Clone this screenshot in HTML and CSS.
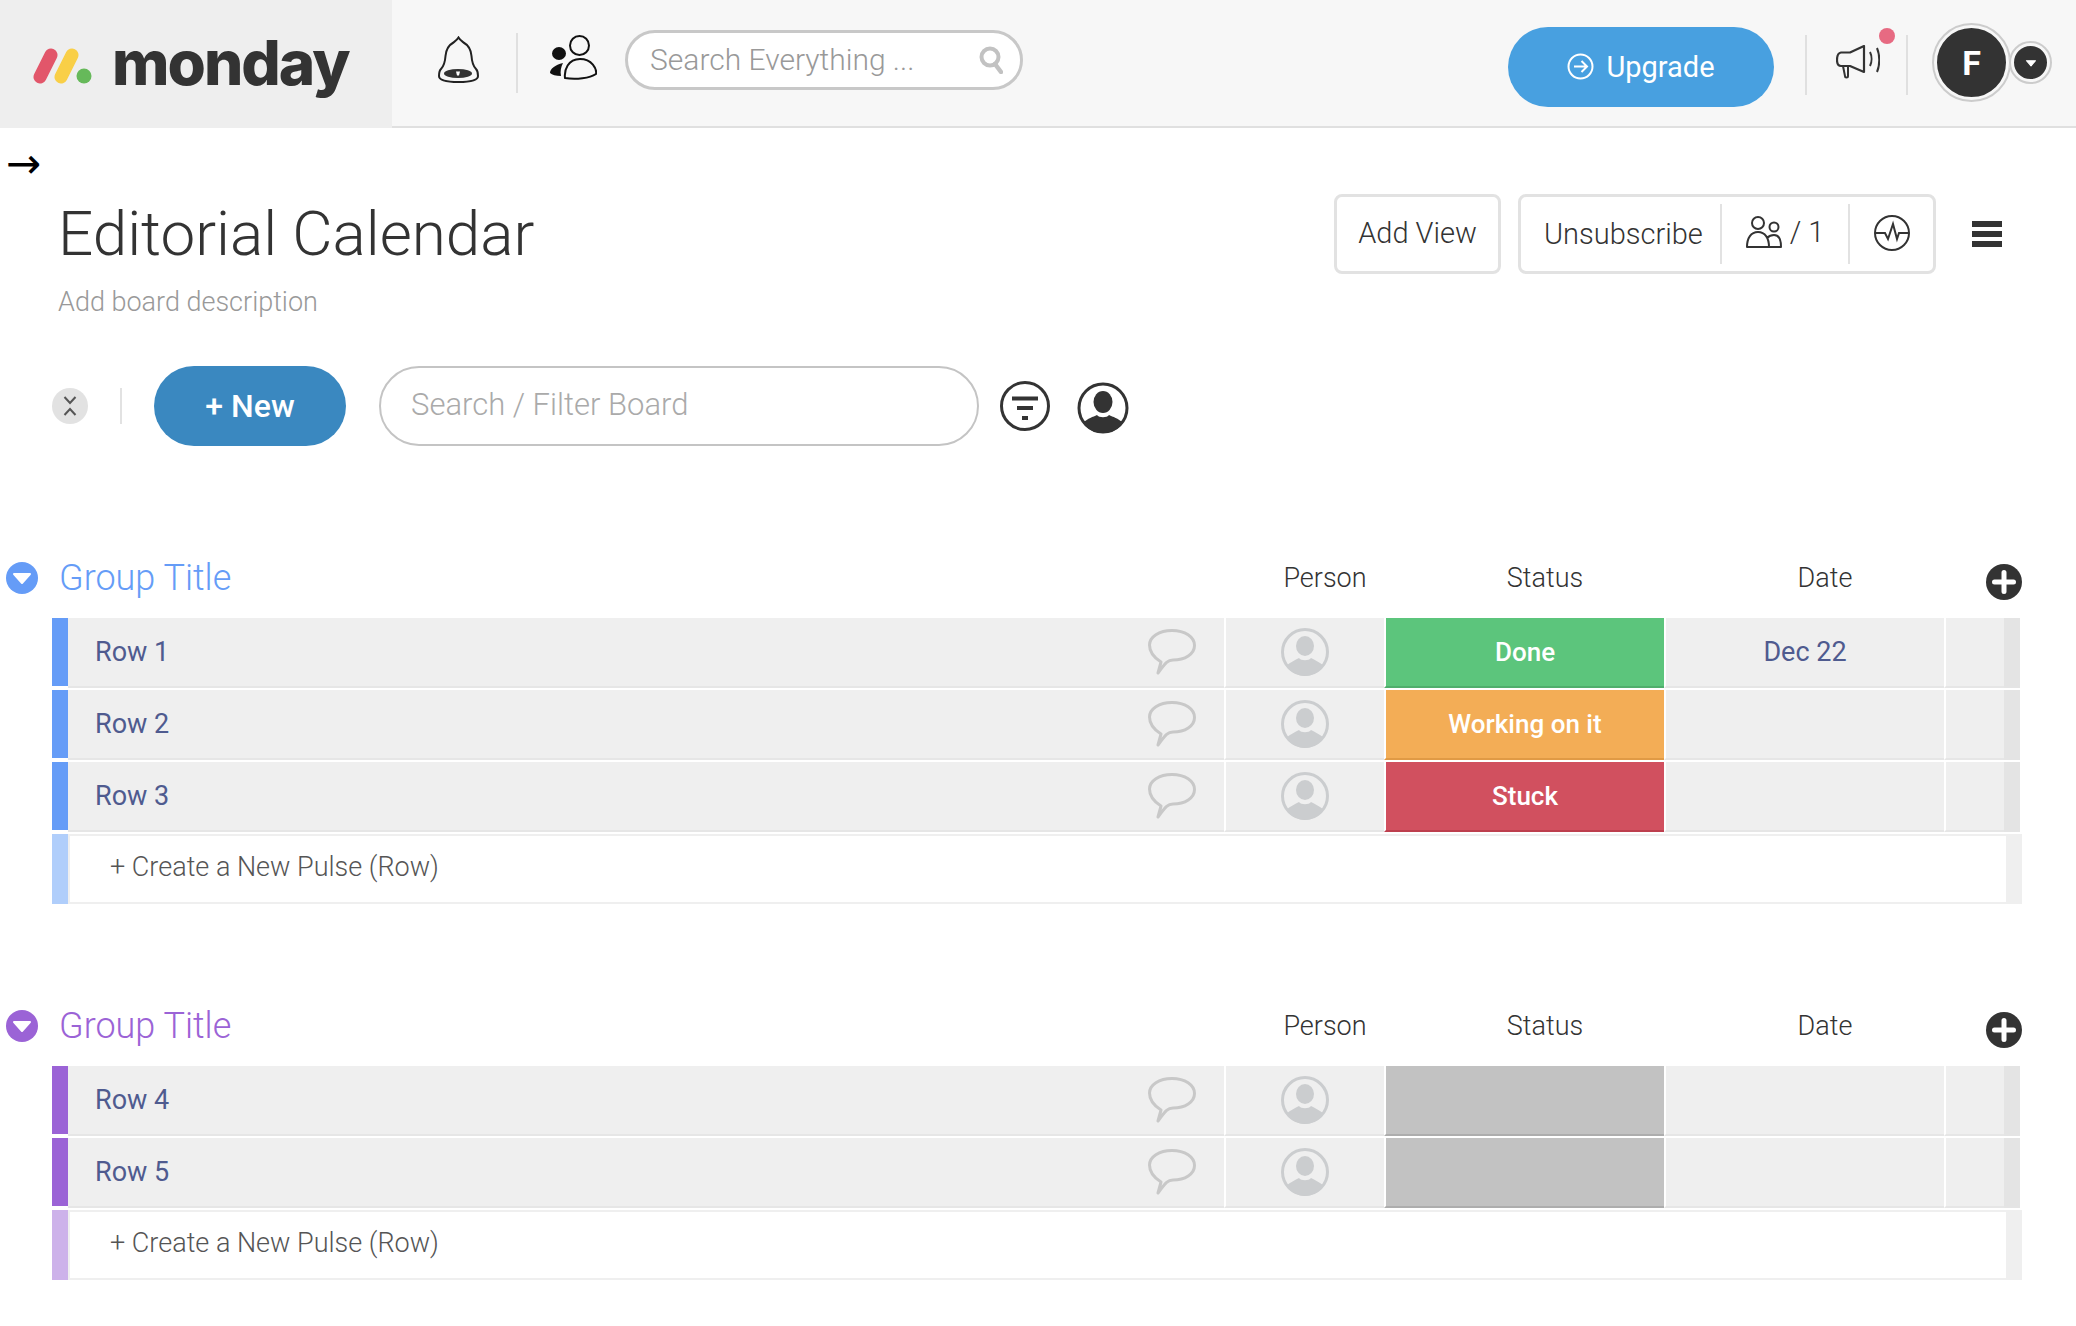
FILE: index.html
```html
<!DOCTYPE html>
<html lang="en">
<head>
	<meta charset="UTF-8">
	<title>Editorial Calendar</title>
	<link rel="stylesheet" href="styles.css">
</head>
<body>
	<svg class="defs" width="0" height="0">
		<symbol id="bubble" viewBox="0 0 48 46">
			<path d="M10 44 L13 33 C5 28 1.500 22 1.500 16 C1.500 8 11 1.500 24 1.500 C37 1.500 46.500 8 46.500 16.500 C46.500 25 37 31 25 31 C20 31 18 33 10 44 Z" fill="none" stroke="#c8c8c8" stroke-width="3" stroke-linejoin="round"/>
		</symbol>
		<symbol id="avatar" viewBox="0 0 48 48">
			<circle cx="24" cy="24" r="22.500" fill="none" stroke="#cbcdcf" stroke-width="3"/>
			<ellipse cx="24" cy="18" rx="9" ry="10" fill="#cbcdcf"/>
			<path d="M6 37 C10 34 14 32 18 30 C20 33 28 33 30 30 C34 32 38 34 42 37 C38 44 31 48 24 48 C17 48 10 44 6 37 Z" fill="#cbcdcf"/>
		</symbol>
		<symbol id="caret" viewBox="0 0 32 32">
			<path d="M8 12 H24 L16 21 Z" fill="#fff" stroke="#fff" stroke-width="2" stroke-linejoin="round"/>
		</symbol>
		<symbol id="plus" viewBox="0 0 36 36">
			<circle cx="18" cy="18" r="18" fill="#333"/>
			<path d="M18 8.500 V27.500 M8.500 18 H27.500" stroke="#fff" stroke-width="5" stroke-linecap="round"/>
		</symbol>
	</svg>

	<header class="topbar">
		<div class="logo">
			<svg class="logo-mark" width="60" height="36" viewBox="0 0 60 36">
				<path d="M7 29 L18 7" stroke="#e2566a" stroke-width="13" stroke-linecap="round"/>
				<path d="M28 29 L39 7" stroke="#f9cf47" stroke-width="13" stroke-linecap="round"/>
				<circle cx="51" cy="28" r="7.500" fill="#66b95a"/>
			</svg>
			<span class="logo-text">monday</span>
		</div>
		<div class="topbar-main">
			<svg class="bell" width="41" height="47" viewBox="0 0 41 47">
				<path d="M20.500 1.500 C19 4 17.500 5 15.500 6.500 C10 9.500 8 14 7.500 20 C7 27 6 30 3 33 C1 35 1 38 1 40 C1 44 9 46 20.500 46 C32 46 40 44 40 40 C40 38 40 35 38 33 C35 30 34 27 33.500 20 C33 14 31 9.500 25.500 6.500 C23.500 5 22 4 20.500 1.500 Z" fill="none" stroke="#222" stroke-width="2"/>
				<ellipse cx="20" cy="37.500" rx="14" ry="4.500" fill="#333"/>
				<path d="M18 35.500 H22 L21 39.500 H19 Z" fill="#fff"/>
			</svg>
			<span class="top-sep"></span>
			<svg class="people" width="47" height="45" viewBox="0 0 47 45">
				<circle cx="29.500" cy="10.500" r="9.500" fill="none" stroke="#111" stroke-width="2"/>
				<path d="M15 43 C14 35 18 24 30 24 C42 24 47 34 46 39 C40 43 26 45 15 43 Z" fill="none" stroke="#111" stroke-width="2"/>
				<ellipse cx="9" cy="18.500" rx="7" ry="6.500" fill="#111"/>
				<path d="M13 28 C5 30 0 34 0 38 C2 40 6 41 11 41 C10 36 11 32 13 28 Z" fill="#111"/>
			</svg>
			<div class="top-search">
				<span class="top-search-text">Search Everything ...</span>
				<svg width="24" height="28" viewBox="0 0 24 28">
					<circle cx="11" cy="11" r="8.500" fill="none" stroke="#c2c2c2" stroke-width="4"/>
					<path d="M16 18 L22 26" stroke="#c2c2c2" stroke-width="4.500" stroke-linecap="round"/>
				</svg>
			</div>
			<button class="upgrade">
				<svg width="27" height="27" viewBox="0 0 27 27">
					<circle cx="13.500" cy="13.500" r="12" fill="none" stroke="#fff" stroke-width="2"/>
					<path d="M7 13.500 H20 M14.500 8 L20 13.500 L14.500 19" fill="none" stroke="#fff" stroke-width="2"/>
				</svg>
				Upgrade
			</button>
			<span class="top-sep top-sep-a"></span>
			<div class="megaphone">
				<svg width="44" height="34" viewBox="0 0 44 34">
					<path d="M28 1 V27 L14 21 H5 C2 21 1 18 1 15 C1 11 2 8 5 7.500 H14 Z" fill="none" stroke="#333" stroke-width="2.200" stroke-linejoin="round"/>
					<path d="M7 21 L9 31 C9 33 12 33 12 31 L12 22" fill="none" stroke="#333" stroke-width="2"/>
					<path d="M34 7 C36 11 36 17 34 21 M41 3 C44 10 44 20 41 27" fill="none" stroke="#333" stroke-width="2"/>
				</svg>
				<span class="notify-dot"></span>
			</div>
			<span class="top-sep top-sep-b"></span>
			<div class="account">
				<div class="avatar-big">F</div>
				<div class="avatar-drop">
					<svg width="18" height="18" viewBox="0 0 32 32"><use href="#caret"/></svg>
				</div>
			</div>
		</div>
	</header>

	<main>
		<div class="side-arrow">→</div>

		<section class="board-head">
			<div class="board-titles">
				<h1>Editorial Calendar</h1>
				<p>Add board description</p>
			</div>
			<div class="board-actions">
				<div class="outline-box add-view">Add View</div>
				<div class="outline-box action-group">
					<span class="action-cell cell-unsub">Unsubscribe</span>
					<span class="action-cell cell-members">
						<svg width="36" height="32" viewBox="0 0 36 32">
							<circle cx="12" cy="7" r="6" fill="none" stroke="#333" stroke-width="2"/>
							<circle cx="28" cy="11" r="4.500" fill="none" stroke="#333" stroke-width="2"/>
							<path d="M1 31 C1 22 5 16 12 16 C19 16 23 22 23 31 Z M23 31 H35 C35 24 33 19 28 19 C25 19 23 20 21 22" fill="none" stroke="#333" stroke-width="2" stroke-linejoin="round"/>
						</svg>
						/ 1
					</span>
					<span class="action-cell cell-pulse">
						<svg width="36" height="36" viewBox="0 0 36 36">
							<circle cx="18" cy="18" r="17" fill="none" stroke="#333" stroke-width="2"/>
							<path d="M1 18 H11 L14 24 L19 9 L23 24 L25 18 H35" fill="none" stroke="#333" stroke-width="2"/>
						</svg>
					</span>
				</div>
				<div class="hamburger"><span></span><span></span><span></span></div>
			</div>
		</section>

		<section class="toolbar">
			<div class="collapse">
				<svg width="36" height="36" viewBox="0 0 36 36">
					<path d="M12.500 9 L18 15 L23.500 9 M12.500 27 L18 21 L23.500 27" fill="none" stroke="#555" stroke-width="2"/>
				</svg>
			</div>
			<span class="tool-sep"></span>
			<button class="new-btn">+ New</button>
			<div class="filter-input">Search / Filter Board</div>
			<svg class="tool-icon" width="50" height="50" viewBox="0 0 50 50">
				<circle cx="25" cy="25" r="23.500" fill="none" stroke="#333" stroke-width="3"/>
				<path d="M12 17.500 H38 M17 27 H33" stroke="#333" stroke-width="4"/>
				<rect x="22" y="35" width="6" height="4" fill="#333"/>
			</svg>
			<svg class="tool-icon tool-person" width="52" height="52" viewBox="0 0 52 52">
				<circle cx="26" cy="26" r="24" fill="#fff" stroke="#333" stroke-width="3"/>
				<ellipse cx="26" cy="20" rx="9.500" ry="11" fill="#333"/>
				<path d="M6 41 C11 36 16 35 20 33 C22 36 30 36 32 33 C36 35 41 36 46 41 C41 48 33 51 26 51 C19 51 11 48 6 41 Z" fill="#333"/>
			</svg>
		</section>

		<section class="group group-blue">
			<div class="group-head">
				<div class="group-toggle"><svg width="32" height="32"><use href="#caret"/></svg></div>
				<h2 class="group-title">Group Title</h2>
				<span class="col-name">Person</span>
				<span class="col-name">Status</span>
				<span class="col-name">Date</span>
				<svg class="col-add" width="36" height="36"><use href="#plus"/></svg>
			</div>
			<div class="row">
				<div class="cell-bar"></div>
				<div class="cell cell-name">Row 1<svg width="48" height="46"><use href="#bubble"/></svg></div>
				<div class="cell cell-person"><svg width="48" height="48"><use href="#avatar"/></svg></div>
				<div class="cell cell-status st-done">Done</div>
				<div class="cell cell-date">Dec 22</div>
				<div class="cell"></div>
				<div class="cell-end"></div>
			</div>
			<div class="row">
				<div class="cell-bar"></div>
				<div class="cell cell-name">Row 2<svg width="48" height="46"><use href="#bubble"/></svg></div>
				<div class="cell cell-person"><svg width="48" height="48"><use href="#avatar"/></svg></div>
				<div class="cell cell-status st-working">Working on it</div>
				<div class="cell cell-date"></div>
				<div class="cell"></div>
				<div class="cell-end"></div>
			</div>
			<div class="row">
				<div class="cell-bar"></div>
				<div class="cell cell-name">Row 3<svg width="48" height="46"><use href="#bubble"/></svg></div>
				<div class="cell cell-person"><svg width="48" height="48"><use href="#avatar"/></svg></div>
				<div class="cell cell-status st-stuck">Stuck</div>
				<div class="cell cell-date"></div>
				<div class="cell"></div>
				<div class="cell-end"></div>
			</div>
			<div class="new-row">
				<div class="new-bar"></div>
				<div class="new-text">+ Create a New Pulse (Row)</div>
			</div>
		</section>

		<section class="group group-purple">
			<div class="group-head">
				<div class="group-toggle"><svg width="32" height="32"><use href="#caret"/></svg></div>
				<h2 class="group-title">Group Title</h2>
				<span class="col-name">Person</span>
				<span class="col-name">Status</span>
				<span class="col-name">Date</span>
				<svg class="col-add" width="36" height="36"><use href="#plus"/></svg>
			</div>
			<div class="row">
				<div class="cell-bar"></div>
				<div class="cell cell-name">Row 4<svg width="48" height="46"><use href="#bubble"/></svg></div>
				<div class="cell cell-person"><svg width="48" height="48"><use href="#avatar"/></svg></div>
				<div class="cell cell-status st-empty"></div>
				<div class="cell cell-date"></div>
				<div class="cell"></div>
				<div class="cell-end"></div>
			</div>
			<div class="row">
				<div class="cell-bar"></div>
				<div class="cell cell-name">Row 5<svg width="48" height="46"><use href="#bubble"/></svg></div>
				<div class="cell cell-person"><svg width="48" height="48"><use href="#avatar"/></svg></div>
				<div class="cell cell-status st-empty"></div>
				<div class="cell cell-date"></div>
				<div class="cell"></div>
				<div class="cell-end"></div>
			</div>
			<div class="new-row">
				<div class="new-bar"></div>
				<div class="new-text">+ Create a New Pulse (Row)</div>
			</div>
		</section>
	</main>
</body>
</html>
```

FILE: styles.css
```css
*{padding: 0;margin: 0;box-sizing: border-box;}
body{
	font-family: Roboto, "Liberation Sans", sans-serif;
	background-color: #fff;
	color: #333;
	overflow: hidden;
}
.defs{
	position: absolute;
}
button{
	border: none;
	font-family: inherit;
}

/* top bar */
.topbar{
	display: flex;
	height: 128px;
}
.logo{
	width: 392px;
	background-color: #eee;
	display: flex;
	align-items: center;
	padding-left: 33px;
	gap: 19px;
}
.logo-mark{
	margin-top: 4px;
}
.logo-text{
	font-family: Inter, sans-serif;
	font-weight: 800;
	font-size: 62px;
	letter-spacing: -2px;
	line-height: 1;
	color: #333;
	margin-top: -3px;
}
.topbar-main{
	flex: 1;
	display: flex;
	align-items: center;
	background-color: #f7f7f7;
	border-bottom: 2px solid #e0e0e0;
	padding-left: 46px;
}
.bell{
	margin-top: -8px;
}
.top-sep{
	width: 2px;
	height: 60px;
	background-color: #e0e0e0;
	margin: 0 32px 0 37px;
}
.people{
	margin-top: -12px;
}
.top-search{
	width: 398px;
	height: 60px;
	margin-left: 28px;
	margin-top: -7px;
	border: 3px solid #c8c8c8;
	border-radius: 30px;
	background-color: #fff;
	display: flex;
	align-items: center;
	justify-content: space-between;
	padding: 0 17px 0 22px;
}
.top-search-text{
	font-size: 30px;
	font-weight: 300;
	color: #999;
}
.upgrade{
	width: 266px;
	height: 80px;
	margin-left: 485px;
	margin-top: 7px;
	border-radius: 40px;
	background-color: #48a0e0;
	color: #fff;
	font-size: 29px;
	display: flex;
	align-items: center;
	justify-content: center;
	gap: 12px;
}
.top-sep-a{
	margin: 3px 29px 0 31px;
}
.megaphone{
	position: relative;
	width: 44px;
	height: 34px;
	margin-top: -2px;
}
.notify-dot{
	position: absolute;
	top: -17px;
	right: -15px;
	width: 16px;
	height: 16px;
	border-radius: 50%;
	background-color: #e76a82;
}
.top-sep-b{
	margin: 3px 24px 0 26px;
}
.account{
	display: flex;
	align-items: center;
	margin-top: -1px;
}
.avatar-big{
	width: 79px;
	height: 79px;
	border-radius: 50%;
	background-color: #333;
	border: 5px solid #f7f7f7;
	outline: 2px solid #ccc;
	outline-offset: -2px;
	color: #fff;
	font-size: 34px;
	font-weight: 700;
	display: flex;
	align-items: center;
	justify-content: center;
}
.avatar-drop{
	width: 43px;
	height: 43px;
	margin-left: -2px;
	border-radius: 50%;
	background-color: #333;
	border: 5px solid #f7f7f7;
	outline: 2px solid #ccc;
	outline-offset: -2px;
	display: flex;
	align-items: center;
	justify-content: center;
}

/* board head */
.side-arrow{
	height: 66px;
	padding-left: 6px;
	font-family: "DejaVu Sans", sans-serif;
	font-size: 42px;
	line-height: 72px;
	color: #000;
}
.board-head{
	display: flex;
	justify-content: space-between;
	padding: 0 74px 0 58px;
	height: 172px;
}
.board-titles h1{
	font-size: 62px;
	font-weight: 300;
	line-height: 80px;
}
.board-titles p{
	font-size: 27px;
	font-weight: 300;
	color: #999;
	margin-top: 12px;
}
.board-actions{
	display: flex;
	height: 80px;
	align-items: center;
}
.outline-box{
	height: 80px;
	border: 3px solid #e2e2e2;
	border-radius: 8px;
	font-size: 29px;
	font-weight: 300;
	display: flex;
	align-items: center;
}
.add-view{
	width: 167px;
	justify-content: center;
	margin-right: 17px;
	padding-bottom: 3px;
}
.action-group{
	width: 418px;
}
.action-cell{
	height: 60px;
	display: flex;
	align-items: center;
}
.cell-unsub{
	width: 201px;
	padding-left: 23px;
	border-right: 2px solid #e2e2e2;
}
.cell-members{
	width: 128px;
	justify-content: center;
	gap: 8px;
	border-right: 2px solid #e2e2e2;
	padding-bottom: 4px;
}
.cell-pulse{
	flex: 1;
	justify-content: center;
	padding-bottom: 2px;
}
.hamburger{
	width: 30px;
	margin-left: 36px;
	display: flex;
	flex-direction: column;
	gap: 4px;
}
.hamburger span{
	height: 6px;
	background-color: #333;
}

/* toolbar */
.toolbar{
	display: flex;
	align-items: center;
	height: 80px;
	padding-left: 52px;
}
.collapse{
	width: 36px;
	height: 36px;
	border-radius: 50%;
	background-color: #e2e2e2;
}
.tool-sep{
	width: 2px;
	height: 36px;
	background-color: #e2e2e2;
	margin: 0 32px;
}
.new-btn{
	width: 192px;
	height: 80px;
	border-radius: 40px;
	background-color: #3a88c0;
	color: #fff;
	font-size: 32px;
	font-weight: 500;
}
.filter-input{
	width: 600px;
	height: 80px;
	margin-left: 33px;
	border: 2px solid #c4c4c4;
	border-radius: 40px;
	padding-left: 30px;
	font-size: 31px;
	font-weight: 300;
	line-height: 74px;
	color: #aaa;
}
.tool-icon{
	margin-left: 21px;
}
.tool-person{
	margin-left: 27px;
	margin-top: 4px;
}

/* groups */
.group{
	padding-left: 6px;
	margin-top: 110px;
}
.group-purple{
	margin-top: 100px;
}
.group-blue{
	--group: #659cf7;
	--group-light: #b0cefb;
}
.group-purple{
	--group: #9b63d6;
	--group-light: #cdb2ea;
}
.group-head{
	display: flex;
	align-items: center;
	height: 62px;
	padding-bottom: 18px;
	position: relative;
}
.group-toggle{
	width: 32px;
	height: 32px;
	border-radius: 50%;
	background-color: var(--group);
}
.group-title{
	width: 1186px;
	margin-left: 21px;
	font-size: 36px;
	font-weight: 300;
	color: var(--group);
}
.col-name{
	width: 160px;
	font-size: 27px;
	font-weight: 300;
	text-align: center;
}
.col-name:nth-of-type(2){
	width: 280px;
}
.col-name:nth-of-type(3){
	width: 280px;
}
.col-add{
	margin-left: 21px;
	margin-top: 8px;
}
.row{
	display: grid;
	grid-template-columns: 16px 1156px 160px 280px 280px 60px 16px;
	height: 70px;
	margin: 0 0 2px 46px;
	font-size: 27px;
	color: #4f5b8f;
}
.cell-bar{
	background-color: var(--group);
	height: 68px;
}
.cell{
	background-color: #efefef;
	border-bottom: 2px solid #e6e6e6;
	border-left: 2px solid #fff;
	display: flex;
	align-items: center;
	justify-content: center;
}
.cell-end{
	background-color: #e4e4e4;
}
.cell-name{
	border-left: none;
	justify-content: space-between;
	padding: 0 28px 0 27px;
}
.cell-status{
	color: #fff;
	font-weight: 500;
	font-size: 26px;
}
.st-done{
	background-color: #5cc57c;
	border-bottom-color: #4fae6c;
}
.st-working{
	background-color: #f3ad56;
	border-bottom-color: #e09a45;
}
.st-stuck{
	background-color: #d1505f;
	border-bottom-color: #bd3f4e;
}
.st-empty{
	background-color: #c2c2c2;
	border-bottom-color: #adadad;
}
.new-row{
	display: flex;
	height: 70px;
	margin-left: 46px;
	width: 1970px;
	background-color: #efefef;
}
.new-bar{
	width: 16px;
	background-color: var(--group-light);
}
.new-text{
	width: 1936px;
	margin: 2px 0 2px 2px;
	background-color: #fff;
	padding-left: 40px;
	font-size: 27px;
	font-weight: 300;
	color: #555;
	line-height: 62px;
}
```
